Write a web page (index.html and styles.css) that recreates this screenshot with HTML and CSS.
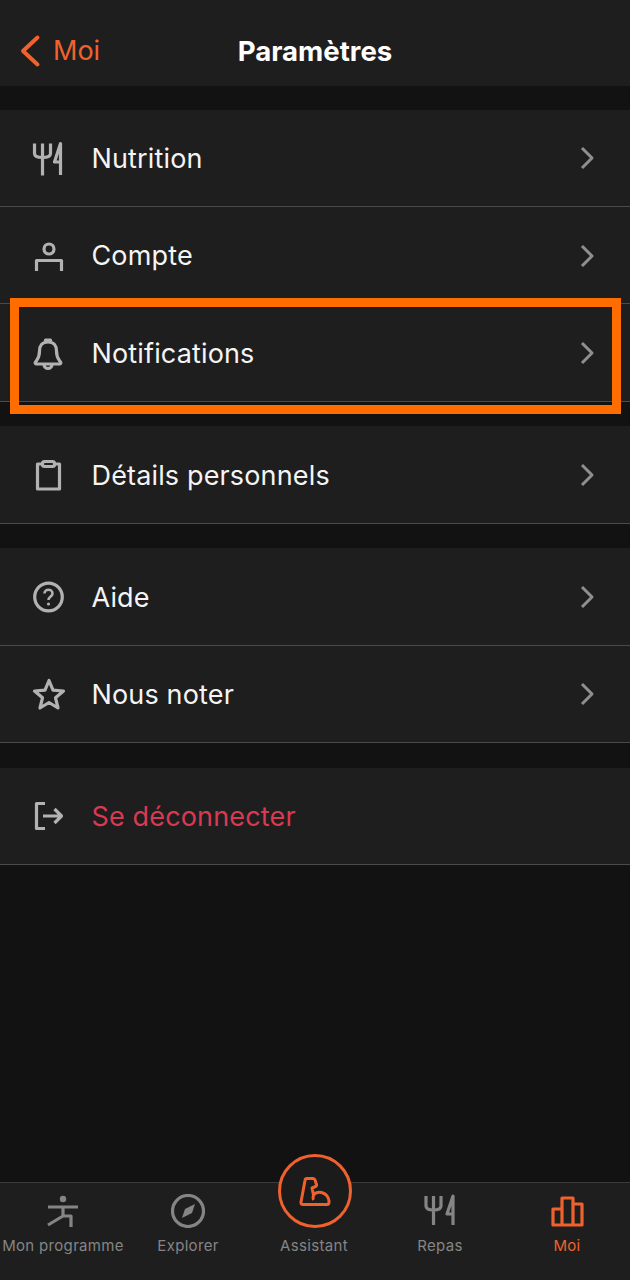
FILE: index.html
```html
<!DOCTYPE HTML>
<html lang="fr">
<head>
<meta charset="utf-8">
<title>Paramètres</title>
<link rel="stylesheet" href="styles.css">
</head>
<body>
<div class="screen">
  <header class="topbar">
    <a class="back">
      <svg class="back-icon" viewBox="0 0 22 34"><path d="M18.5 3.500 4 17l14.500 13.500"/></svg>
      <span>Moi</span>
    </a>
    <h1 class="title">Paramètres</h1>
  </header>

  <main class="content">
    <section class="group">
      <div class="row">
        <svg class="icon" viewBox="0 0 32 32"><path d="M2.500 1.500v10q0 4 8 4t8-4v-10M10.500 1.500v32M28.500 33V1.500L22.500 20h6"/></svg>
        <span class="label">Nutrition</span>
        <svg class="chevron" viewBox="0 0 16 24"><path d="M3 2l10 10L3 22"/></svg>
      </div>
      <div class="row">
        <svg class="icon" viewBox="0 0 32 32"><circle cx="17" cy="9" r="5"/><path d="M4.500 31V20.500h25V31"/></svg>
        <span class="label">Compte</span>
        <svg class="chevron" viewBox="0 0 16 24"><path d="M3 2l10 10L3 22"/></svg>
      </div>
      <div class="row">
        <svg class="icon" viewBox="0 0 32 32"><path d="M16 5c-6 0-8.500 4-8.500 9 0 7-2 8-4 11-.7 1-.2 2 1 2h23c1.200 0 1.700-1 1-2-2-3-4-4-4-11 0-5-2.500-9-8.500-9zM13.500 5V3h5v2M12 27c0 6 8 6 8 0"/></svg>
        <span class="label">Notifications</span>
        <svg class="chevron" viewBox="0 0 16 24"><path d="M3 2l10 10L3 22"/></svg>
      </div>
    </section>

    <section class="group">
      <div class="row">
        <svg class="icon" viewBox="0 0 32 32"><path d="M10 5H5.500v25h22V5H23"/><rect x="10.500" y="2.500" width="12" height="5" rx="2"/></svg>
        <span class="label">Détails personnels</span>
        <svg class="chevron" viewBox="0 0 16 24"><path d="M3 2l10 10L3 22"/></svg>
      </div>
    </section>

    <section class="group">
      <div class="row">
        <svg class="icon" viewBox="0 0 32 32"><circle cx="16.500" cy="16" r="13.800"/><path class="thin" d="M12.500 12.500c0-5 8-5 8 0 0 3-4 3-4 6.500"/><circle class="dot" cx="16.500" cy="23" r="1.600"/></svg>
        <span class="label">Aide</span>
        <svg class="chevron" viewBox="0 0 16 24"><path d="M3 2l10 10L3 22"/></svg>
      </div>
      <div class="row">
        <svg class="icon" viewBox="0 0 32 32"><path d="M17 2.500l4 9.700 10.500.8-8 6.800 2.500 10.200-9-5.500-9 5.500 2.500-10.200-8-6.800 10.500-.8z"/></svg>
        <span class="label">Nous noter</span>
        <svg class="chevron" viewBox="0 0 16 24"><path d="M3 2l10 10L3 22"/></svg>
      </div>
    </section>

    <section class="group">
      <div class="row">
        <svg class="icon" viewBox="0 0 32 32"><path d="M13 3.500H4.500v25H13M11 16h18M22.500 9l7 7-7 7"/></svg>
        <span class="label label-danger">Se déconnecter</span>
      </div>
    </section>
  </main>

  <nav class="tabbar">
    <a class="tab">
      <svg class="tab-icon" viewBox="0 0 34 34"><circle class="dot" cx="17" cy="5" r="3.200"/><path d="M2 13h30M17 13v9M2 31l15-9h8v11"/></svg>
      <span>Mon programme</span>
    </a>
    <a class="tab">
      <svg class="tab-icon" viewBox="0 0 34 34"><circle cx="17" cy="17" r="15.500"/><path class="dot" d="M24 10l-3 9-10 5 3-9z"/></svg>
      <span>Explorer</span>
    </a>
    <a class="tab">
      <div class="coach">
        <svg class="coach-icon" viewBox="0 0 32 32"><path d="M2 27 6 5.500q.3-2 2-2h6q1.500 0 2 1.500l1.500 4.500q.3 1.500-1 2L13 13l1.500 7q3-3.500 8-2.500 6.500 1.500 7.500 8.500v1q0 2.500-2 2.500H4q-2.500 0-2-2.500zM14.500 20q-1 3.500 0 5"/></svg>
      </div>
      <span>Assistant</span>
    </a>
    <a class="tab">
      <svg class="tab-icon" viewBox="0 0 34 34"><path d="M3 2v10q0 4 7.500 4T18 12V2M10.500 2v29M30 31V2L24 20h6"/></svg>
      <span>Repas</span>
    </a>
    <a class="tab tab-active">
      <svg class="tab-icon" viewBox="0 0 34 34"><path d="M3 31V15h9v16zM12 31V4h11v27zM23 31V10h9v21z"/></svg>
      <span>Moi</span>
    </a>
  </nav>

  <!-- highlight drawn on top of the screenshot -->
  <div class="highlight"></div>
</div>
</body>
</html>
```

FILE: styles.css
```css
* { box-sizing: border-box; }

body {
    margin: 0;
    background: #121212;
    font-family: Inter, "Liberation Sans", sans-serif;
    color: #f4f4f4;
}

svg { fill: none; stroke-linejoin: round; }

.screen {
    position: relative;
    display: flex;
    flex-direction: column;
    width: 630px;
    height: 1280px;
    overflow: hidden;
}

/* top bar */
.topbar {
    position: relative;
    display: flex;
    align-items: center;
    justify-content: center;
    height: 86px;
    padding-top: 15px;
    background: #1e1e1e;
}
.back {
    position: absolute;
    left: 19px;
    top: 34px;
    display: flex;
    align-items: center;
    gap: 12px;
    color: #f0622d;
    font-size: 27px;
    line-height: 34px;
}
.back-icon { width: 22px; height: 34px; stroke: #f0622d; stroke-width: 4; stroke-linecap: round; }
.title { margin: 0; font-size: 27.600px; font-weight: 700; color: #fff; }

/* settings list */
.content { flex: 1; padding-top: 23.800px; }
.group { margin-bottom: 24.700px; }
.row {
    display: flex;
    align-items: center;
    height: 97.300px;
    padding: 1px 35px 0 32px;
    background: #1e1e1e;
    border-bottom: 1px solid #4a4a4a;
}
.icon { flex: none; width: 32px; height: 32px; overflow: visible; stroke: #b2b2b2; stroke-width: 3.200; }
.icon .thin { stroke-width: 2.600; }
.dot { fill: currentColor; stroke: none; }
.icon .dot { fill: #b2b2b2; }
.label { flex: 1; margin-left: 27.500px; font-size: 27px; letter-spacing: .15px; }
.label-danger { color: #d93a52; }
.chevron { flex: none; width: 16px; height: 24px; stroke: #8f8f8f; stroke-width: 3; }

/* bottom tabs */
.tabbar {
    display: grid;
    grid-template-columns: 126px 124px 128px 124px 128px;
    height: 98px;
    background: #1e1e1e;
    border-top: 1px solid #3c3c3c;
}
.tab {
    position: relative;
    display: flex;
    flex-direction: column;
    align-items: center;
    padding-top: 11px;
    color: #858585;
    font-size: 15px;
    line-height: 20px;
    white-space: nowrap;
    letter-spacing: .32px;
}
.tab-icon { width: 34px; height: 34px; margin-bottom: 8px; stroke: #858585; stroke-width: 3.200; color: #858585; }
.tab span { height: 20px; }
.tab-active { color: #f0622d; padding-left: 2px; }
.tab-active .tab-icon { stroke: #f0622d; }

.coach {
    position: absolute;
    left: 28px;
    top: -29px;
    display: flex;
    align-items: center;
    justify-content: center;
    width: 74px;
    height: 74px;
    background: #1b1b1b;
    border: 3px solid #f0622d;
    border-radius: 50%;
}
.tab .coach + span { margin-top: 42px; }
.coach-icon { width: 32px; height: 32px; stroke: #f0622d; stroke-width: 3; }

/* orange box around the Notifications row */
.highlight {
    position: absolute;
    left: 10px;
    top: 298px;
    width: 611px;
    height: 116px;
    border: 9.500px solid #ff6d00;
}
```
